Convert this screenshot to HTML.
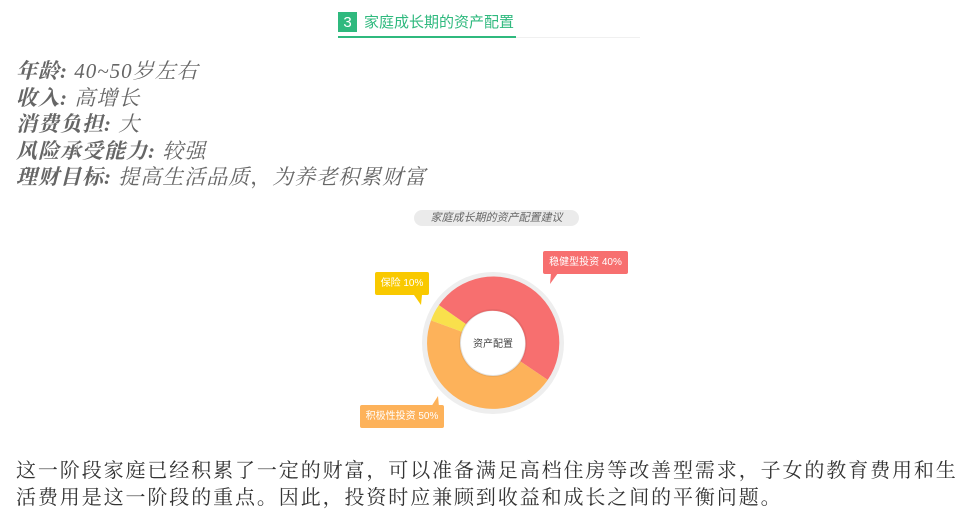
<!DOCTYPE html>
<html><head><meta charset="utf-8"><style>
body{margin:0;width:974px;height:525px;background:#fff;position:relative;overflow:hidden;font-family:"Liberation Serif","Noto Serif CJK SC",serif}
.a{position:absolute}
.hd{left:338px;top:12px;font-family:"Liberation Sans","Noto Sans CJK SC",sans-serif;font-size:15px;color:#2fb97e;line-height:21px}
.num{display:inline-block;width:19px;height:20px;background:#2fb97e;color:#fff;text-align:center;font-size:15px;margin-right:7px;vertical-align:top}
.info{left:16px;top:58px;font-size:21px;line-height:26.5px;color:#666;font-style:italic;letter-spacing:1px}
.info b{color:#666}
.lbl{position:absolute;font-family:"Liberation Sans","Noto Sans CJK SC",sans-serif;font-size:10px;color:#fff;line-height:23px;text-align:center;border-radius:2px}
.p{left:16px;top:458px;width:990px;font-size:20px;line-height:27px;color:#333;letter-spacing:1.9px;white-space:nowrap}
</style></head><body>
<div class="a hd"><span class="num">3</span>家庭成长期的资产配置</div>
<div class="a" style="left:338px;top:36px;width:178px;height:2px;background:#2fb97e"></div>
<div class="a" style="left:516px;top:37px;width:124px;height:1px;background:#f0f0f0"></div>
<div class="a info"><b>年龄:</b> 40~50岁左右<br><b>收入:</b> 高增长<br><b>消费负担:</b> 大<br><b>风险承受能力:</b> 较强<br><b>理财目标:</b> 提高生活品质<span style="font-style:normal">，</span>为养老积累财富</div>
<div class="a" style="left:414px;top:210px;width:165px;height:16px;border-radius:8px;background:#ebebeb;color:#666;font-size:11px;line-height:16px;text-align:center;font-style:italic;font-family:'Liberation Sans','Noto Sans CJK SC',sans-serif">家庭成长期的资产配置建议</div>
<svg class="a" style="left:0;top:0" width="974" height="525">
<circle cx="493" cy="343" r="71" fill="#eeeeee"/>
<path d="M438.9,305.1 A66,66 0 0 1 547.7,379.9 L520.4,361.4 A33,33 0 0 0 466.0,324.1 Z" fill="#f76f6f"/>
<path d="M547.7,379.9 A66,66 0 0 1 431.0,320.4 L462.0,331.7 A33,33 0 0 0 520.4,361.4 Z" fill="#fdb25a"/>
<path d="M431.0,320.4 A66,66 0 0 1 438.9,305.1 L466.0,324.1 A33,33 0 0 0 462.0,331.7 Z" fill="#f9e04c"/>
<circle cx="493" cy="343" r="34" fill="#000" opacity="0.06"/>
<circle cx="493" cy="343" r="32" fill="#fff"/>
<text x="493" y="347" text-anchor="middle" font-size="10" fill="#444" font-family="Liberation Sans,Noto Sans CJK SC,sans-serif">资产配置</text>
<polygon points="551,273 558,273 550,284" fill="#f76f6f"/>
<polygon points="414,295 422,295 421,305" fill="#f9c900"/>
<polygon points="431,407 439,407 438,396" fill="#fdb25a"/>
</svg>
<div class="lbl" style="left:543px;top:251px;width:85px;background:#f76f6f">稳健型投资 40%</div>
<div class="lbl" style="left:375px;top:272px;width:54px;background:#f9c900">保险 10%</div>
<div class="lbl" style="left:360px;top:405px;width:84px;background:#fdb25a">积极性投资 50%</div>
<div class="a p">这一阶段家庭已经积累了一定的财富，可以准备满足高档住房等改善型需求，子女的教育费用和生<br>活费用是这一阶段的重点。因此，投资时应兼顾到收益和成长之间的平衡问题。</div>
</body></html>
